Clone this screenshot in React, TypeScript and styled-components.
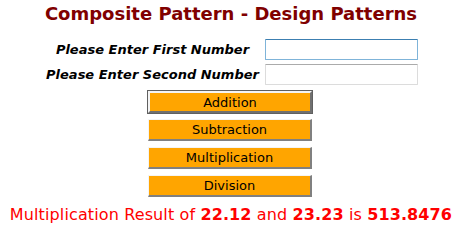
import styled, { createGlobalStyle } from "styled-components";

const GlobalStyle = createGlobalStyle`
  body {
    margin: 0;
    background: #ffffff;
    font-family: "DejaVu Sans", Verdana, sans-serif;
  }
`;

const operations = ["Addition", "Subtraction", "Multiplication", "Division"];

function App() {
  return (
    <>
      <GlobalStyle />
      <Page>
        <Title>Composite Pattern - Design Patterns</Title>

        <Form>
          <Label>Please Enter First Number</Label>
          <NumberInput $focused defaultValue="" />
          <Label>Please Enter Second Number</Label>
          <NumberInput defaultValue="" />
        </Form>

        <Buttons>
          {operations.map((op) => (
            <OpButton key={op} $active={op === "Addition"}>
              {op}
            </OpButton>
          ))}
        </Buttons>

        <Result>
          Multiplication Result of <b>22.12</b> and <b>23.23</b> is{" "}
          <b>513.8476</b>
        </Result>
      </Page>
    </>
  );
}

const Page = styled.div`
  width: 462px;
  display: flex;
  flex-direction: column;
  align-items: center;
  padding-top: 3px;
`;

const Title = styled.h1`
  margin: 0;
  font-size: 18px;
  font-weight: bold;
  color: #800000;
  line-height: 22px;
`;

const Form = styled.div`
  display: grid;
  grid-template-columns: 216px 153px;
  align-items: center;
  column-gap: 4px;
  row-gap: 4px;
  margin-top: 14px;
`;

const Label = styled.span`
  justify-self: center;
  font-size: 13px;
  font-weight: bold;
  font-style: italic;
  color: #000000;
  white-space: nowrap;
`;

const NumberInput = styled.input<{ $focused?: boolean }>`
  box-sizing: border-box;
  width: 153px;
  height: 21px;
  padding: 1px 3px;
  font: 13px "DejaVu Sans", sans-serif;
  border: 1px solid ${(p) => (p.$focused ? "#7fb4d9" : "#dcdcdc")};
  border-top-color: ${(p) => (p.$focused ? "#3c7fb1" : "#ababab")};
  border-radius: 1px;
  outline: none;
`;

const Buttons = styled.div`
  display: flex;
  flex-direction: column;
  gap: 6px;
  margin-top: 6px;
  margin-left: -2px;
`;

const OpButton = styled.button<{ $active?: boolean }>`
  box-sizing: border-box;
  width: 164px;
  height: 22px;
  background: #ffa500;
  color: #000000;
  font: 13px "DejaVu Sans", sans-serif;
  padding: 0;
  border-style: solid;
  border-width: ${(p) => (p.$active ? "2px" : "1px 2px 2px 1px")};
  border-color: ${(p) =>
    p.$active ? "#f4f4f4 #707070 #707070 #f4f4f4" : "#f4f4f4 #808080 #808080 #f4f4f4"};
  outline: ${(p) => (p.$active ? "1px solid #606060" : "none")};
  cursor: pointer;
`;

const Result = styled.p`
  margin: 8px 0 0;
  font-size: 16px;
  letter-spacing: 0.12px;
  color: #ff0000;
  white-space: nowrap;
`;

export default App;
